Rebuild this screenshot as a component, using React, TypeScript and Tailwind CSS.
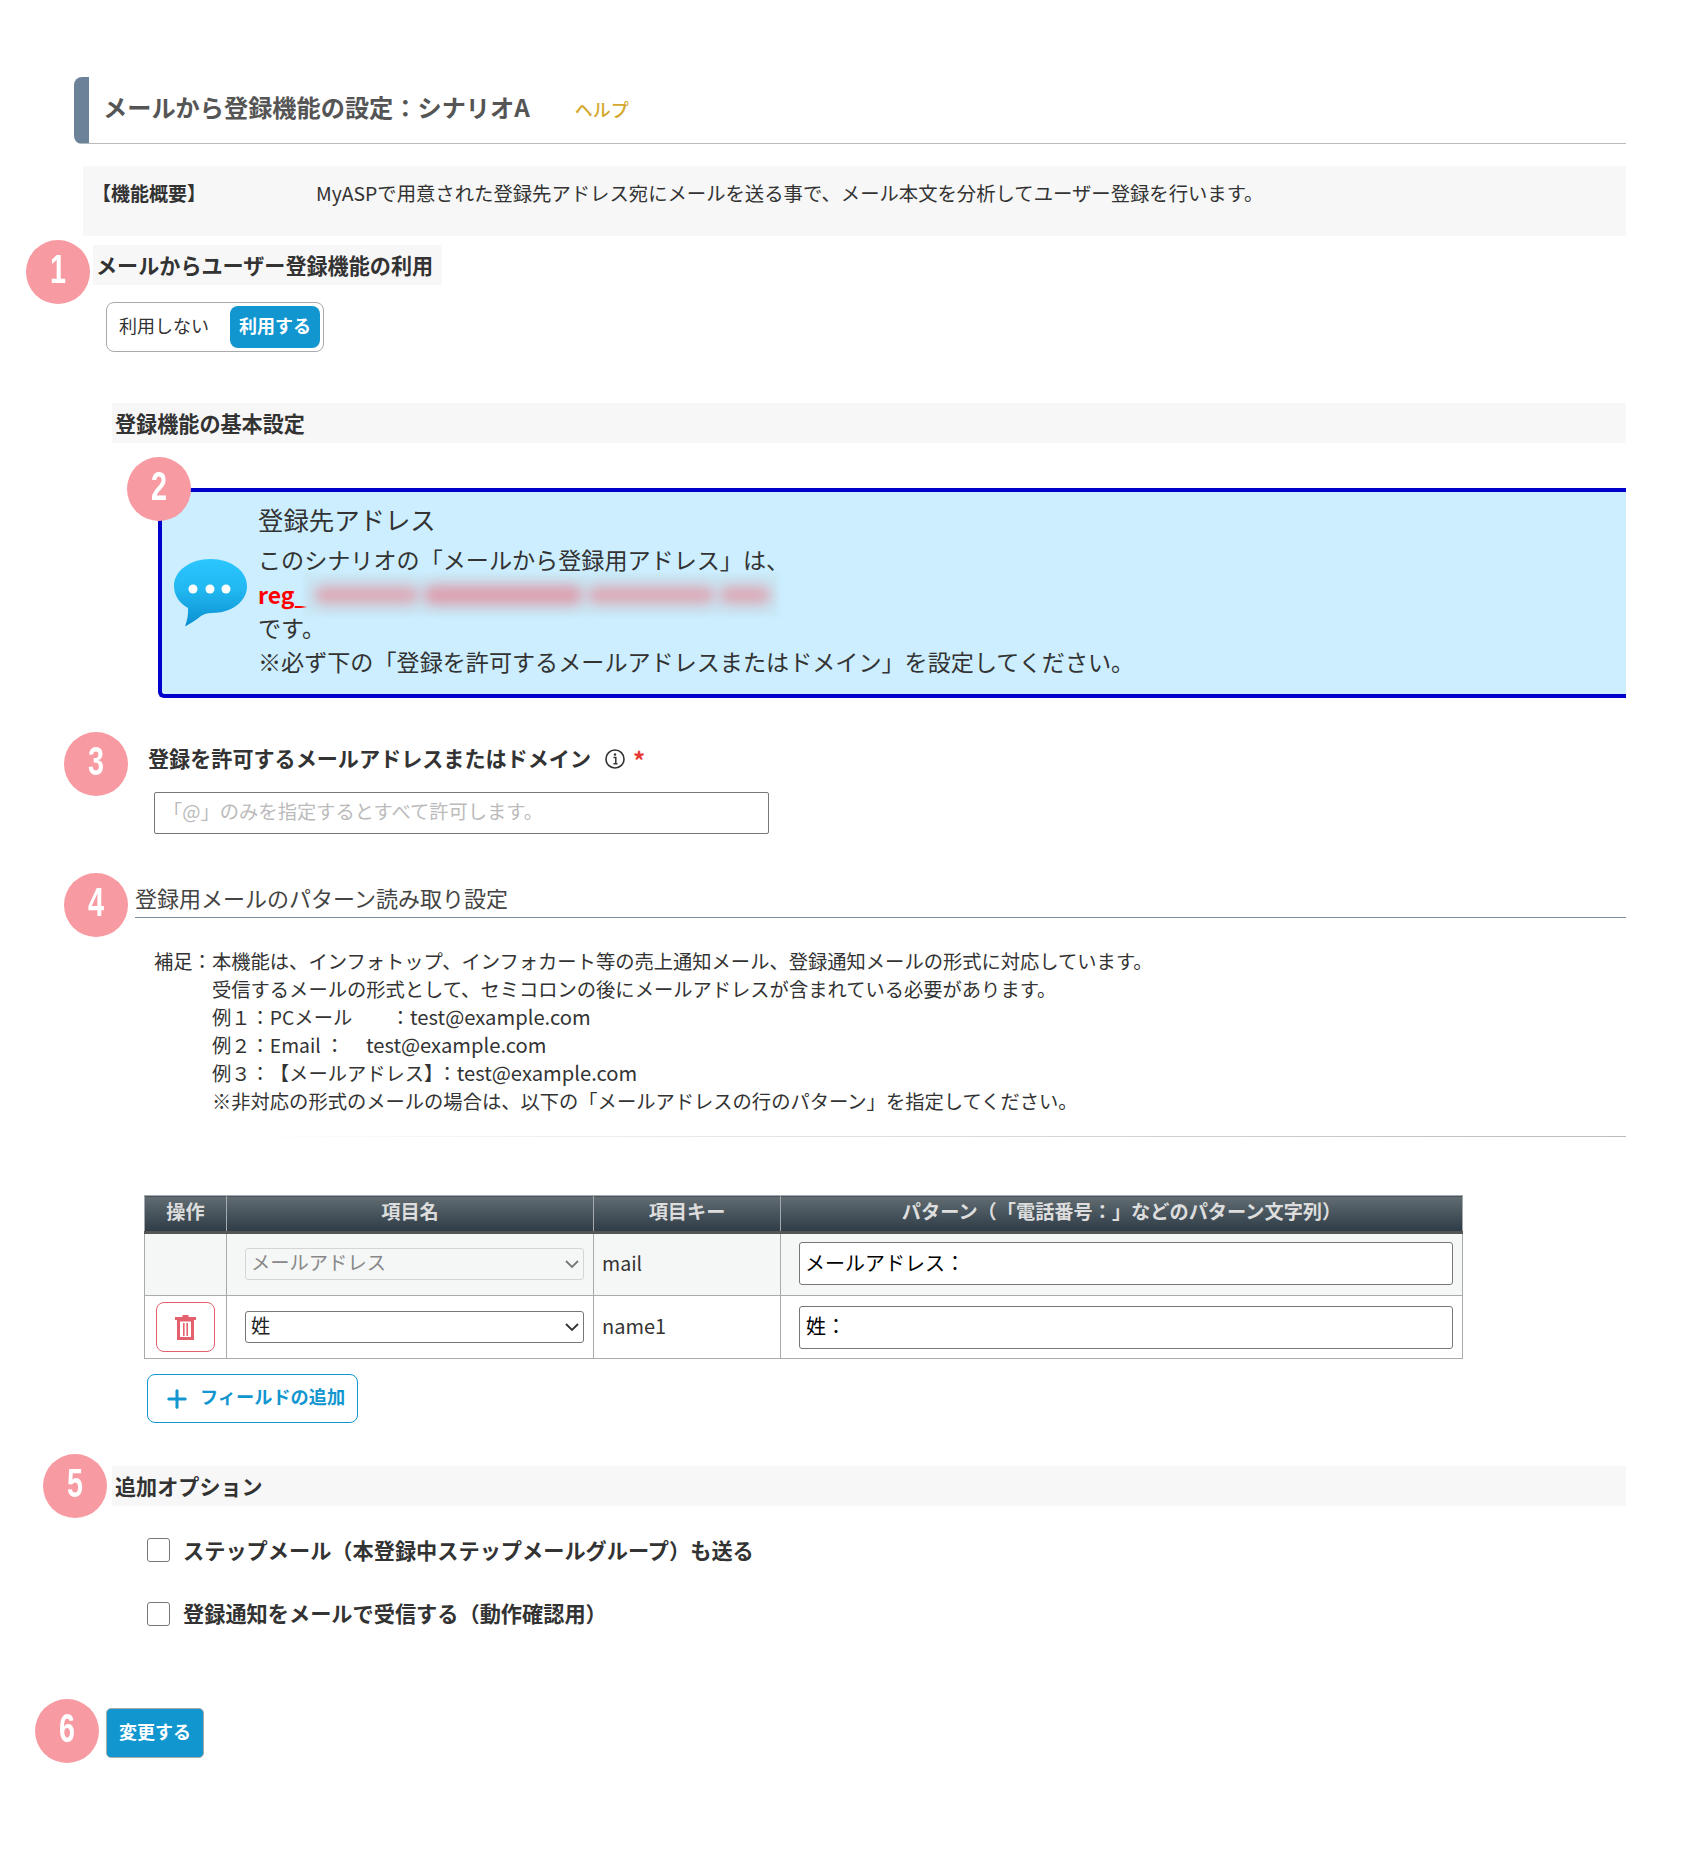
import React from "react";
import { Plus } from "lucide-react";

const FONT = "[font-family:'Noto_Sans_CJK_JP','Noto_Sans',sans-serif] [text-spacing-trim:space-all]";

function Badge({ n, className }: { n: string; className: string }) {
  return (
    <div className={`absolute z-10 flex h-[64px] w-[64px] items-center justify-center rounded-full bg-[#f79aa2] ${className}`}>
      <span className="scale-x-[0.72] pb-[6px] text-[40px] leading-none font-bold text-white [font-family:'Liberation_Sans',sans-serif]">{n}</span>
    </div>
  );
}

function Chat() {
  return (
    <svg width="73" height="68" viewBox="0 0 73 68" className="shrink-0">
      <defs>
        <linearGradient id="chat" x1="0" y1="0" x2="0" y2="1">
          <stop offset="0" stopColor="#2bc6ff" />
          <stop offset="0.45" stopColor="#22b8f2" />
          <stop offset="1" stopColor="#0a8fd0" />
        </linearGradient>
      </defs>
      <path d="M36.5 0C57 0 73 12 73 27C73 43 57 54 38 54C33 54 30 55 27 57C22 61 16 65 11 67.5C13 62 14.5 56 14 49C5 44 0 36 0 27C0 12 16 0 36.5 0Z" fill="url(#chat)" />
      <circle cx="19" cy="30" r="4.5" fill="#fff" />
      <circle cx="36" cy="30" r="4.5" fill="#fff" />
      <circle cx="52" cy="30" r="4.5" fill="#fff" />
    </svg>
  );
}

function Trash() {
  return (
    <svg width="21" height="25" viewBox="0 0 21 25">
      <path d="M7.5 0H13.5V2H21V5H0V2H7.5Z" fill="#e4606d" />
      <path d="M3.5 5H17.5V23.5H3.5Z" fill="none" stroke="#e4606d" strokeWidth="3" />
      <path d="M8 8H9.6V21H8Z M11.4 8H13V21H11.4Z" fill="#e4606d" />
    </svg>
  );
}

function Info() {
  return (
    <svg width="22" height="22" viewBox="0 0 22 22" className="ml-[13px]">
      <circle cx="11" cy="11" r="9" fill="none" stroke="#333" strokeWidth="1.6" />
      <circle cx="11" cy="6.5" r="1.2" fill="#333" />
      <path d="M9.5 9.5H11.8V15.5M9.5 15.8H13.5" fill="none" stroke="#333" strokeWidth="1.5" />
    </svg>
  );
}

function Heading({ children, className = "" }: { children: React.ReactNode; className?: string }) {
  return (
    <div className={`flex h-[40px] items-center bg-[#f7f7f7] pl-[3px] text-[21.1px] font-bold text-[#333] ${className}`}>
      <span className="mt-[1px]">{children}</span>
    </div>
  );
}

function Cell({ children, className = "" }: { children?: React.ReactNode; className?: string }) {
  return <td className={`border border-[#aaaaaa] align-middle text-[19.3px] text-[#333] ${className}`}>{children}</td>;
}

function Th({ children, w }: { children: React.ReactNode; w: string }) {
  return (
    <th className={`${w} border-x border-t border-[#a3a9ad] border-b-[3px] border-b-[#555555] bg-gradient-to-b from-[#626d72] to-[#2e3c47] pb-[4px] text-center text-[19.2px] font-bold text-[#dddddd]`}>
      {children}
    </th>
  );
}

const Mail = () => <span className="text-[20.2px]">test@example.com</span>;

export default function App() {
  return (
    <div className={`relative min-h-[1865px] bg-white pl-[74px] pr-[63px] pt-[77px] text-[#333] ${FONT}`}>
      <div className="flex h-[67px] items-center rounded-l-[8px] border-b border-l-[15px] border-b-[#bbbbbb] border-l-[#6b8299] pb-[6px] pl-[14px]">
        <span className="text-[24.2px] font-bold text-[#555555]">メールから登録機能の設定：シナリオA</span>
        <span className="ml-[45px] mt-[5px] text-[18px] font-medium text-[#d4a72c]">ヘルプ</span>
      </div>

      <div className="ml-[9px] mt-[22px] flex h-[70px] bg-[#f7f7f7] pl-[9px] pt-[15px] text-[19px] leading-[24px]">
        <div className="w-[224px] font-bold">【機能概要】</div>
        <div className="text-[19.35px]">MyASPで用意された登録先アドレス宛にメールを送る事で、メール本文を分析してユーザー登録を行います。</div>
      </div>

      <div className="relative">
        <Badge n="1" className="left-[-48px] top-[-5px]" />
        <Heading className="ml-[19px] mt-[9px] w-[349px]">メールからユーザー登録機能の利用</Heading>
      </div>

      <div className="ml-[32px] mt-[17px] flex h-[50px] w-[218px] items-center justify-between rounded-[8px] border border-[#aaaaaa] pl-[12px] pr-[3px] text-[18px]">
        <span className="pb-[3px]">利用しない</span>
        <span className="flex h-[42px] w-[90px] items-center justify-center rounded-[8px] bg-[#1296cf] pb-[3px] font-bold text-white">利用する</span>
      </div>

      <Heading className="ml-[38px] mt-[51px]">登録機能の基本設定</Heading>

      <div className="relative ml-[84px] mt-[45px]">
        <Badge n="2" className="left-[-31px] top-[-31px]" />
        <div className="flex h-[210px] items-center rounded-l-[6px] border-y-4 border-l-4 border-[#0000cc] bg-[#cceeff] pl-[12px]">
          <Chat />
          <div className="ml-[11px] pb-[7px] text-[23.1px] leading-[34px] text-[#333]">
            <div className="mb-[5px] text-[25.4px] leading-[36px]">登録先アドレス</div>
            <div>このシナリオの「メールから登録用アドレス」は、</div>
            <div className="relative flex h-[34px] items-center font-bold text-[#ff0000]">
              <span className="pt-[2px] text-[23px]">reg_</span>
              <div className="absolute left-[46px] top-[-2px] flex h-[42px] w-[474px] items-center gap-[4px] bg-[#c9e7f5] pl-[10px] blur-[2px]">
                <div className="h-[18px] w-[105px] rounded-full bg-[#dca9b6] blur-[6px]" />
                <div className="h-[20px] w-[160px] rounded-full bg-[#dc9fae] blur-[6px]" />
                <div className="h-[18px] w-[128px] rounded-full bg-[#dca9b6] blur-[6px]" />
                <div className="h-[18px] w-[52px] rounded-full bg-[#dca9b6] blur-[6px]" />
              </div>
            </div>
            <div>です。</div>
            <div>※必ず下の「登録を許可するメールアドレスまたはドメイン」を設定してください。</div>
          </div>
        </div>
      </div>

      <div className="relative">
        <Badge n="3" className="left-[-10px] top-[-13px]" />
        <div className="ml-[74px] mt-[47px] flex h-[28px] items-center text-[21.1px] font-bold">
          登録を許可するメールアドレスまたはドメイン
          <Info />
          <span className="ml-[7px] mt-[2px] text-[24px] font-bold text-[#e53935]">*</span>
        </div>
      </div>

      <input
        readOnly
        placeholder="「@」のみを指定するとすべて許可します。"
        className="ml-[80px] mt-[19px] block h-[42px] w-[615px] rounded-[2px] border border-[#777777] pb-[4px] pl-[8px] pr-[10px] text-[19.3px] placeholder:text-[#bbbbbb]"
      />

      <div className="relative">
        <Badge n="4" className="left-[-10px] top-[-7px]" />
        <div className="ml-[61px] mt-[46px] flex h-[38px] items-center border-b border-[#7f8fa3] pb-[3px] text-[22px] text-[#444]">
          登録用メールのパターン読み取り設定
        </div>
      </div>

      <div className="ml-[80px] mt-[29px] flex text-[19.3px] leading-[28px] text-[#333]">
        <div className="w-[58px] shrink-0">補足：</div>
        <div>
          <div>本機能は、インフォトップ、インフォカート等の売上通知メール、登録通知メールの形式に対応しています。</div>
          <div>受信するメールの形式として、セミコロンの後にメールアドレスが含まれている必要があります。</div>
          <div className="whitespace-pre">例１：PCメール　　：<Mail /></div>
          <div className="whitespace-pre">例２：Email ：     <Mail /></div>
          <div>例３：【メールアドレス】<span className="ml-[-6px]">：</span><Mail /></div>
          <div>※非対応の形式のメールの場合は、以下の「メールアドレスの行のパターン」を指定してください。</div>
        </div>
      </div>

      <div className="ml-[166px] mt-[21px] h-px bg-gradient-to-r from-white to-[#bbbbbb]" />

      <table className="ml-[70px] mt-[58px] w-[1318px] table-fixed border-collapse">
        <thead>
          <tr className="h-[37px]">
            <Th w="w-[82px]">操作</Th>
            <Th w="w-[367px]">項目名</Th>
            <Th w="w-[187px]">項目キー</Th>
            <Th w="w-[682px]">パターン（「電話番号：」などのパターン文字列）</Th>
          </tr>
        </thead>
        <tbody>
          <tr className="h-[63px] bg-[#f5f7f6]">
            <Cell />
            <Cell className="px-[18px]">
              <div className="relative mb-[2px] flex h-[32px] w-[339px] items-center rounded-[3px] border border-[#d5d5d5] pb-[3px] pl-[5px] text-[#888888]">
                メールアドレス
                <svg width="14" height="9" viewBox="0 0 14 9" className="absolute right-[4px] top-[11px]"><path d="M1 1L7 7L13 1" fill="none" stroke="#777" strokeWidth="1.8" /></svg>
              </div>
            </Cell>
            <Cell className="pb-[3px] pl-[8px] text-[19.6px]">mail</Cell>
            <Cell className="px-[18px]">
              <input readOnly value="メールアドレス：" className="mb-[2px] block h-[43px] w-[654px] rounded-[3px] border border-[#777777] bg-white pb-[3px] pl-[5px] pr-[6px] text-[20px] text-black" />
            </Cell>
          </tr>
          <tr className="h-[63px]">
            <Cell className="pl-[11px]">
              <button className="flex h-[50px] w-[59px] items-center justify-center rounded-[8px] border border-[#e4606d]">
                <Trash />
              </button>
            </Cell>
            <Cell className="px-[18px]">
              <div className="relative flex h-[32px] w-[339px] items-center rounded-[3px] border border-[#777777] pb-[3px] pl-[5px] text-[#222]">
                姓
                <svg width="14" height="9" viewBox="0 0 14 9" className="absolute right-[4px] top-[11px]"><path d="M1 1L7 7L13 1" fill="none" stroke="#333" strokeWidth="1.8" /></svg>
              </div>
            </Cell>
            <Cell className="pb-[3px] pl-[8px] text-[20px]">name1</Cell>
            <Cell className="px-[18px]">
              <input readOnly value="姓：" className="block h-[43px] w-[654px] rounded-[3px] border border-[#777777] bg-white pb-[3px] pl-[6px] pr-[6px] text-[20px] text-black" />
            </Cell>
          </tr>
        </tbody>
      </table>

      <button className="ml-[73px] mt-[15px] flex h-[49px] w-[211px] items-center rounded-[8px] border border-[#1296cf] pl-[15px] text-[18.2px] font-bold text-[#1296cf]">
        <Plus size={28} strokeWidth={2.6} />
        <span className="ml-[9px] pb-[3px]">フィールドの追加</span>
      </button>

      <div className="relative">
        <Badge n="5" className="left-[-31px] top-[-12px]" />
        <Heading className="ml-[38px] mt-[43px]">追加オプション</Heading>
      </div>

      <label className="ml-[73px] mt-[32px] flex h-[24px] items-center text-[21.2px] font-bold">
        <span className="h-[24px] w-[23px] shrink-0 rounded-[3px] border border-[#777777]" />
        <span className="ml-[13px] pb-[1px]">ステップメール（本登録中ステップメールグループ）も送る</span>
      </label>

      <label className="ml-[73px] mt-[40px] flex h-[24px] items-center text-[21.2px] font-bold">
        <span className="h-[24px] w-[23px] shrink-0 rounded-[3px] border border-[#777777]" />
        <span className="ml-[13px] pb-[2px]">登録通知をメールで受信する（動作確認用）</span>
      </label>

      <div className="relative">
        <Badge n="6" className="left-[-39px] top-[-9px]" />
        <button className="ml-[32px] mt-[82px] flex h-[50px] w-[98px] items-center justify-center rounded-[5px] border border-[#aaaaaa] bg-[#1296cf] pb-[3px] text-[18px] font-bold text-white">
          変更する
        </button>
      </div>
    </div>
  );
}
